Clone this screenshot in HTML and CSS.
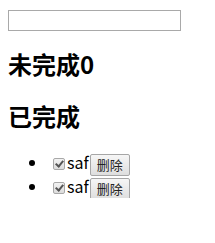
FILE: index.html
```html
<!DOCTYPE html>
<html lang="en">

<head>
    <meta charset="UTF-8">
    <meta name="viewport" content="width=device-width, initial-scale=1.0">
    <title>todo</title>
    <link rel="stylesheet" href="styles.css">
</head>

<body>
    <input type="text" class="todo-input">
    <h2 class="title">未完成0</h2>
    <h2 class="title title-done">已完成</h2>
    <ul class="done-list">
        <li><input type="checkbox" class="check" checked><span>saf</span><button class="del">删除</button></li>
        <li><input type="checkbox" class="check" checked><span>saf</span><button class="del">删除</button></li>
    </ul>
</body>

</html>
```

FILE: styles.css
```css
body {
    margin: 8px;
    font-family: "Noto Sans CJK SC", "Liberation Sans", sans-serif;
    font-size: 16px;
}

.todo-input {
    display: block;
    box-sizing: border-box;
    width: 173px;
    height: 21px;
    margin: 2px 0 0 0;
    padding: 1px 2px;
    border: 1px solid #a9a9a9;
}

.title {
    font-size: 24px;
    line-height: 32px;
    margin: 17px 0 20px;
}

.title-done {
    margin-bottom: 18px;
}

.done-list {
    margin: 18px 0 0 0;
    padding-left: 40px;
}

.done-list li {
    height: 24px;
    line-height: 24px;
}

/* 灰色的老式复选框 */
.check {
    appearance: none;
    -webkit-appearance: none;
    position: relative;
    box-sizing: border-box;
    width: 12px;
    height: 12px;
    margin: 0 2px 0 5px;
    vertical-align: -1px;
    border: 1px solid #a8a8a8;
    border-radius: 2px;
    background: linear-gradient(#f2f2f2, #dcdcdc);
}

.check:checked::after {
    content: '';
    position: absolute;
    left: 3px;
    top: 0px;
    width: 3px;
    height: 6px;
    border: solid #555;
    border-width: 0 2px 2px 0;
    transform: rotate(40deg);
}

.del {
    box-sizing: border-box;
    height: 22px;
    padding: 0 6px;
    margin-left: 1px;
    font-family: "Noto Sans CJK SC", sans-serif;
    font-size: 13px;
    line-height: 18px;
    color: #222;
    vertical-align: middle;
    border: 1px solid #a6a6a6;
    border-radius: 2px;
    background: linear-gradient(#f6f6f6, #dedede);
}
```
